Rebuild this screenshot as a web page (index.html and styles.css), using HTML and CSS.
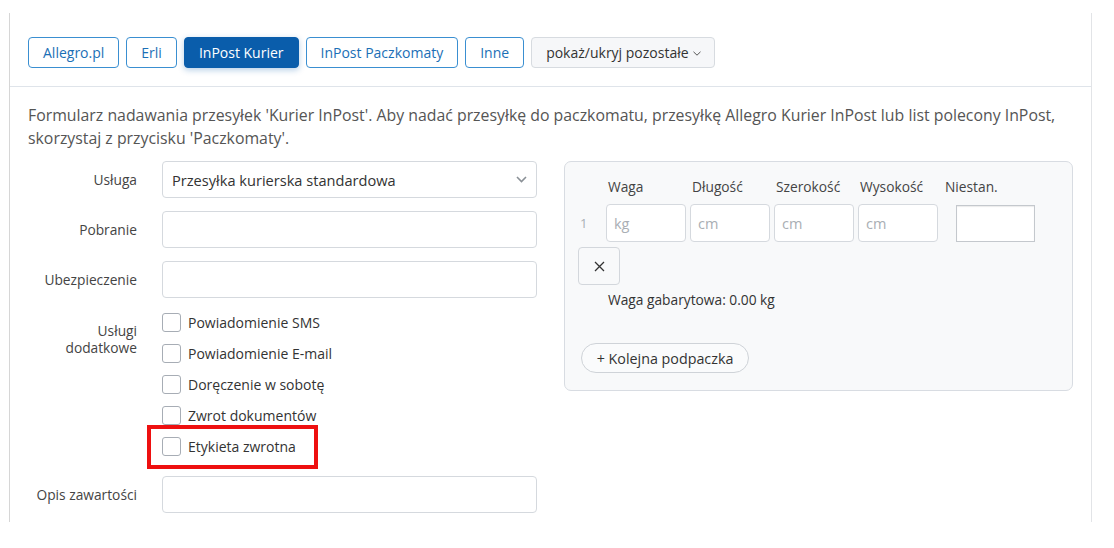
FILE: index.html
```html
<!DOCTYPE html>
<html lang="pl">
<head>
<meta charset="utf-8">
<title>Kurier InPost</title>
<link rel="stylesheet" href="styles.css">
</head>
<body>
<div class="panel">
  <div class="tabs">
    <button class="tab">Allegro.pl</button>
    <button class="tab">Erli</button>
    <button class="tab active">InPost Kurier</button>
    <button class="tab">InPost Paczkomaty</button>
    <button class="tab">Inne</button>
    <button class="tab more">pokaż/ukryj pozostałe <svg class="chev" width="8" height="5" viewBox="0 0 8 5"><path d="M0.5 0.8 L4 4.2 L7.5 0.8" fill="none" stroke="#555" stroke-width="1"/></svg></button>
  </div>
  <p class="intro">Formularz nadawania przesyłek 'Kurier InPost'. Aby nadać przesyłkę do paczkomatu, przesyłkę Allegro Kurier InPost lub list polecony InPost, skorzystaj z przycisku 'Paczkomaty'.</p>
  <div class="content">
    <div class="form">
      <div class="row">
        <div class="label">Usługa</div>
        <div class="select"><span>Przesyłka kurierska standardowa</span><svg width="11" height="7" viewBox="0 0 11 7"><path d="M1 1 L5.5 5.5 L10 1" fill="none" stroke="#8a9096" stroke-width="1.6"/></svg></div>
      </div>
      <div class="row">
        <div class="label">Pobranie</div>
        <div class="input"></div>
      </div>
      <div class="row">
        <div class="label">Ubezpieczenie</div>
        <div class="input"></div>
      </div>
      <div class="row checks-row">
        <div class="label multi">Usługi<br>dodatkowe</div>
        <div class="checks">
          <label class="check"><span class="box"></span>Powiadomienie SMS</label>
          <label class="check"><span class="box"></span>Powiadomienie E-mail</label>
          <label class="check"><span class="box"></span>Doręczenie w sobotę</label>
          <label class="check"><span class="box"></span>Zwrot dokumentów</label>
          <label class="check marked"><span class="box"></span>Etykieta zwrotna<span class="highlight"></span></label>
        </div>
      </div>
      <div class="row">
        <div class="label">Opis zawartości</div>
        <div class="input"></div>
      </div>
    </div>
    <div class="parcels">
      <div class="grid">
        <div></div>
        <div class="head">Waga</div>
        <div class="head">Długość</div>
        <div class="head">Szerokość</div>
        <div class="head">Wysokość</div>
        <div class="head niestan-head">Niestan.</div>
        <div class="num">1</div>
        <div class="pin">kg</div>
        <div class="pin">cm</div>
        <div class="pin">cm</div>
        <div class="pin">cm</div>
        <div class="niestan-cell"><div class="niestan"></div></div>
      </div>
      <button class="remove" aria-label="Usuń"><svg width="11" height="11" viewBox="0 0 11 11"><path d="M1 1 L10 10 M10 1 L1 10" stroke="#333" stroke-width="1.3" fill="none"/></svg></button>
      <div class="dim">Waga gabarytowa: 0.00 kg</div>
      <button class="add">+ Kolejna podpaczka</button>
    </div>
  </div>
</div>
</body>
</html>
```
FILE: styles.css
```css
html, body {
  margin: 0;
  padding: 0;
  background: #fff;
  font-family: "Open Sans", "Noto Sans", sans-serif;
  color: #333;
}
.panel {
  margin: 13px 0 0 9px;
  width: 1083px;
  height: 509px;
  box-sizing: border-box;
  border-left: 1px solid #d6d6d6;
  border-right: 1px solid #e2e4e7;
  overflow: hidden;
}
.tabs {
  display: flex;
  gap: 7px;
  padding: 24px 0 18px 18px;
  border-bottom: 1px solid #dfe4ea;
}
.tab {
  height: 31px;
  box-sizing: border-box;
  padding: 0 14px;
  font-family: inherit;
  font-size: 14px;
  color: #1b6fb6;
  background: #fff;
  border: 1px solid #3a8fd1;
  border-radius: 4px;
  display: flex;
  align-items: center;
}
.tab.active {
  background: #0a5dab;
  border-color: #0a5dab;
  color: #fff;
  box-shadow: 0 2px 6px rgba(10, 93, 171, 0.3);
}
.tab.more {
  background: #f6f7f9;
  border-color: #d7dbe0;
  color: #333;
  padding: 0 13px 0 14px;
}
.chev { margin-left: 4px; margin-top: 2px; }
.intro {
  margin: 17px 0 0;
  padding: 0 18px;
  font-size: 15.85px;
  line-height: 23px;
  color: #555;
}
.content {
  display: grid;
  grid-template-columns: 509px 509px;
  column-gap: 27px;
  padding-left: 18px;
  margin-top: 11px;
  align-items: start;
}
.form {
  display: flex;
  flex-direction: column;
  gap: 13px;
}
.row {
  display: grid;
  grid-template-columns: 109px 375px;
  column-gap: 25px;
  align-items: center;
}
.label {
  text-align: right;
  font-size: 13.75px;
  color: #444;
}
.label.multi {
  align-self: start;
  line-height: 17px;
  padding-top: 15px;
}
.input, .select {
  height: 37px;
  box-sizing: border-box;
  border: 1px solid #d5d9de;
  border-radius: 4px;
  background: #fff;
}
.select {
  display: flex;
  align-items: center;
  justify-content: space-between;
  padding: 0 9px 0 9px;
  font-size: 14.6px;
  color: #333;
}
.checks-row {
  align-items: start;
  margin-top: -4px;
  margin-bottom: 1px;
}
.checks {
  display: flex;
  flex-direction: column;
}
.check {
  position: relative;
  display: flex;
  align-items: center;
  gap: 7px;
  height: 31px;
  font-size: 14px;
  color: #333;
}
.box {
  width: 19px;
  height: 19px;
  box-sizing: border-box;
  border: 1px solid #a7adb5;
  border-radius: 3px;
  background: #fff;
}
.highlight {
  position: absolute;
  left: -15px;
  top: -6px;
  width: 171px;
  height: 44px;
  box-sizing: border-box;
  border: 4px solid #ee1010;
}
.parcels {
  height: 230px;
  box-sizing: border-box;
  border: 1px solid #d8dce2;
  border-radius: 7px;
  background: #f8f9fa;
  padding: 16px 13px 0;
}
.grid {
  display: grid;
  grid-template-columns: 24px 80px 80px 80px 80px 95px;
  column-gap: 4px;
  row-gap: 8px;
  align-items: center;
}
.head {
  font-size: 13.75px;
  line-height: 18px;
  color: #444;
  padding-left: 2px;
}
.niestan-head { padding-left: 3px; }
.num {
  font-size: 13px;
  color: #aab0b6;
  padding-left: 2px;
}
.pin {
  height: 38px;
  box-sizing: border-box;
  border: 1px solid #d5d9de;
  border-radius: 4px;
  background: #fff;
  font-size: 14.5px;
  color: #a9aeb4;
  display: flex;
  align-items: center;
  padding-left: 7px;
}
.niestan-cell { padding-left: 14px; }
.niestan {
  width: 79px;
  height: 37px;
  box-sizing: border-box;
  border: 1px solid #c4c8cd;
  box-shadow: inset 0 1px 1px rgba(0,0,0,0.08);
  background: #fff;
}
.remove {
  display: flex;
  align-items: center;
  justify-content: center;
  margin-top: 5px;
  width: 42px;
  height: 38px;
  box-sizing: border-box;
  border: 1px solid #d3d7dc;
  border-radius: 4px;
  background: #f8f9fa;
  padding: 0;
}
.dim {
  margin-top: 6px;
  padding-left: 30px;
  font-size: 13.75px;
  line-height: 18px;
  color: #333;
}
.add {
  display: block;
  margin: 34px 0 0 3px;
  width: 168px;
  height: 30px;
  box-sizing: border-box;
  border: 1px solid #cfd3d8;
  border-radius: 15px;
  background: #fafbfc;
  font-family: inherit;
  font-size: 14.3px;
  color: #333;
  padding: 0;
}
```
